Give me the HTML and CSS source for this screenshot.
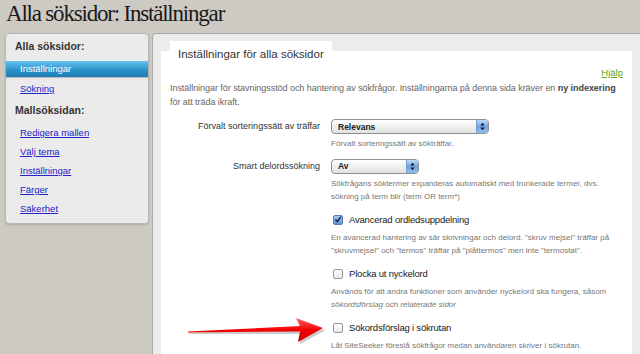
FILE: index.html
```html
<!DOCTYPE html>
<html lang="sv">
<head>
    <meta charset="UTF-8">
    <title>Alla söksidor: Inställningar</title>
    <link rel="stylesheet" href="styles.css">
</head>
<body>
    <h1 class="page-title">Alla söksidor: Inställningar</h1>

    <div class="layout">
        <nav class="sidebar">
            <h2>Alla söksidor:</h2>
            <a class="nav-item active" href="#">Inställningar</a>
            <a class="nav-item" href="#">Sökning</a>

            <h2>Mallsöksidan:</h2>
            <a class="nav-item" href="#">Redigera mallen</a>
            <a class="nav-item" href="#">Välj tema</a>
            <a class="nav-item" href="#">Inställningar</a>
            <a class="nav-item" href="#">Färger</a>
            <a class="nav-item" href="#">Säkerhet</a>
        </nav>

        <main class="main">
            <div class="tab">Inställningar för alla söksidor</div>
            <div class="content">
                <div class="help"><a href="#">Hjälp</a></div>
                <p class="intro">Inställningar för stavningsstöd och hantering av sökfrågor. Inställningarna på denna sida kräver en <strong>ny indexering</strong> för att träda ikraft.</p>

                <div class="field">
                    <label class="field-label">Förvalt sorteringssätt av träffar</label>
                    <div class="select wide">
                        <span>Relevans</span>
                        <span class="stepper">
                            <svg width="5" height="9" viewBox="0 0 5 9"><path d="M2.5 0.8 L4.6 3.6 H0.4 Z M0.4 5.4 H4.6 L2.5 8.2 Z" fill="#111"/></svg>
                        </span>
                    </div>
                    <p class="hint">Förvalt sorteringssätt av sökträffar.</p>
                </div>

                <div class="field">
                    <label class="field-label">Smart delordssökning</label>
                    <div class="select narrow">
                        <span>Av</span>
                        <span class="stepper">
                            <svg width="5" height="9" viewBox="0 0 5 9"><path d="M2.5 0.8 L4.6 3.6 H0.4 Z M0.4 5.4 H4.6 L2.5 8.2 Z" fill="#111"/></svg>
                        </span>
                    </div>
                    <p class="hint">Sökfrågans söktermer expanderas automatiskt med trunkerade termer, dvs. sökning på term blir (term OR term*)</p>
                </div>

                <div class="field check-field">
                    <div class="check">
                        <span class="box checked">
                            <svg width="9" height="9" viewBox="0 0 9 9"><path d="M1.6 4.4 L3.8 6.8 L7.8 1.2" fill="none" stroke="#18284a" stroke-width="1.7"/></svg>
                        </span>
                        <span>Avancerad ordledsuppdelning</span>
                    </div>
                    <p class="hint">En avancerad hantering av sär skrivningar och delord. "skruv mejsel" träffar på "skruvmejsel" och "termos" träffar på "plåttermos" men inte "termostat".</p>
                </div>

                <div class="field check-field">
                    <div class="check">
                        <span class="box"></span>
                        <span>Plocka ut nyckelord</span>
                    </div>
                    <p class="hint">Används för att andra funktioner som använder nyckelord ska fungera, såsom <em>sökordsförslag</em> och <em>relaterade sidor</em></p>
                </div>

                <div class="field check-field marked">
                    <div class="check">
                        <span class="box"></span>
                        <span>Sökordsförslag i sökrutan</span>
                    </div>
                    <p class="hint">Låt SiteSeeker föreslå sökfrågor medan användaren skriver i sökrutan.</p>

                    <!-- annotation arrow pointing at the checkbox -->
                    <svg class="arrow" width="140" height="36" viewBox="0 0 140 36">
                        <defs>
                            <linearGradient id="shaft" x1="0" x2="0" y1="0" y2="1">
                                <stop offset="0" stop-color="#ff6a6a"/>
                                <stop offset="0.5" stop-color="#f20000"/>
                                <stop offset="1" stop-color="#c80000"/>
                            </linearGradient>
                        </defs>
                        <path d="M1 21 L113 16 L110 9 L137 18.5 L112 32 L113 22 L1 22 Z" fill="#555" opacity="0.3"/>
                        <path d="M0 19.6 L112 14 L108 6 L135 16 L110 30 L112 19.5 L0 20.4 Z" fill="url(#shaft)"/>
                    </svg>
                </div>
            </div>
        </main>
    </div>
</body>
</html>
```

FILE: styles.css
```css
body {
    margin: 0;
    padding: 0;
    background-color: #cdc9c3;
    font-family: "Liberation Sans", Arial, sans-serif;
    color: #333;
    height: 354px;
    overflow: hidden;
}

.page-title {
    margin: 0;
    padding: 0 0 0 6px;
    height: 33px;
    line-height: 27px;
    font-family: "Liberation Serif", "Times New Roman", serif;
    font-weight: normal;
    font-size: 23px;
    letter-spacing: -1.2px;
    color: #1a1a1a;
}

.layout {
    display: flex;
    gap: 3px;
    padding-left: 5px;
}

/* sidebar */

.sidebar {
    width: 142px;
    height: 189px;
    flex-shrink: 0;
    background-color: #ebebeb;
    border: 1px solid #b8b6b2;
    border-radius: 4px;
    box-shadow: 0 1px 2px rgba(0, 0, 0, 0.15);
}

.sidebar h2 {
    margin: 0;
    padding: 5px 0 5px 9px;
    font-size: 10.5px;
    font-weight: bold;
    color: #333;
    line-height: 15px;
}

.sidebar h2:first-child {
    padding-top: 5px;
    padding-bottom: 7px;
}

.nav-item {
    display: block;
    padding-left: 14px;
    height: 19px;
    line-height: 19px;
    font-size: 9.5px;
    color: #2323c8;
}

.nav-item.active {
    height: 16px;
    line-height: 16px;
    margin-bottom: 2px;
    color: #fff;
    text-decoration: none;
    background: linear-gradient(#63c3ef, #2a8fc8 60%, #1f7fb8);
    box-shadow: 0 1px 1px rgba(0, 0, 0, 0.2);
}

/* main panel */

.main {
    flex: 1;
    margin-right: -12px;
    background-color: #ececec;
    border-top: 1px solid #aaa8a4;
    border-left: 1px solid #aaa8a4;
    border-top-left-radius: 4px;
    padding: 7px 20px 0 8px;
}

.tab {
    position: relative;
    display: inline-block;
    margin-left: 9px;
    padding: 0 8px;
    height: 21px;
    line-height: 26px;
    background-color: #fff;
    font-size: 11.5px;
    color: #333;
}

.content {
    margin-top: -11px;
    background-color: #fff;
    padding: 15px 9px 20px 9px;
    height: 320px;
}

.help {
    text-align: right;
    font-size: 9.5px;
    line-height: 14px;
}

.help a {
    color: #5aa624;
}

.intro {
    margin: 2px 0 10px;
    font-size: 9px;
    letter-spacing: -0.05px;
    line-height: 13.5px;
    color: #666;
}

.intro strong {
    color: #444;
}

.field {
    display: grid;
    grid-template-columns: 150px 1fr;
    column-gap: 11px;
    margin-bottom: 8px;
}

.field.marked {
    position: relative;
}

.field-label {
    text-align: right;
    font-size: 9px;
    line-height: 15px;
    color: #333;
}

.select {
    box-sizing: border-box;
    height: 15px;
    border: 1px solid #8f8f8f;
    border-radius: 4px;
    background: linear-gradient(#fff, #f0f0f0 50%, #e2e2e2);
    display: flex;
    align-items: center;
    justify-content: space-between;
    padding-left: 6px;
    font-size: 8.5px;
    font-weight: bold;
    color: #222;
    overflow: hidden;
}

.select.wide {
    width: 158px;
}

.select.narrow {
    width: 88px;
}

.stepper {
    width: 11px;
    height: 13px;
    display: flex;
    align-items: center;
    justify-content: center;
    background: linear-gradient(#c0dbf8, #6fa6e6 50%, #8fbff3);
    border-left: 1px solid #7a9cc8;
}

.hint {
    grid-column: 2;
    max-width: 282px;
    margin: 3px 0 0;
    font-size: 8px;
    line-height: 13.5px;
    color: #777;
}

.check-field .check,
.check-field .hint {
    grid-column: 2;
}

.check {
    display: flex;
    align-items: center;
    gap: 6px;
    font-size: 9.5px;
    letter-spacing: -0.2px;
    line-height: 16px;
    color: #222;
}

.box {
    width: 8px;
    height: 8px;
    margin-left: 2px;
    border: 1px solid #999;
    border-radius: 2px;
    background: linear-gradient(#fff, #e8e8e8);
    display: flex;
    align-items: center;
    justify-content: center;
}

.box.checked {
    border-color: #5a7fb0;
    background: linear-gradient(#a9c8ef, #5d93d6);
}

.arrow {
    position: absolute;
    left: 18px;
    top: -8px;
}
```
